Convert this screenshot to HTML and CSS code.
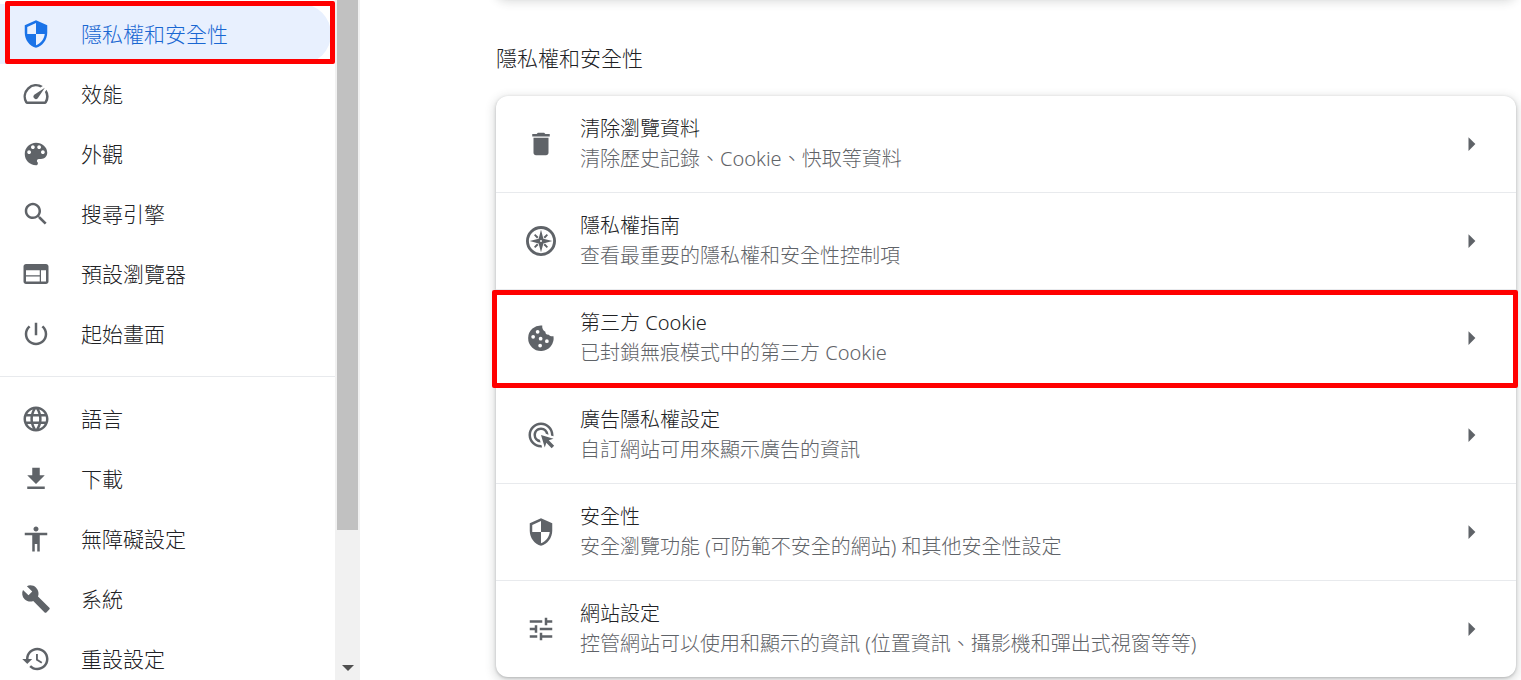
FILE: index.html
```html
<!DOCTYPE html>
<html lang="zh-Hant">
  <head>
    <meta charset="utf-8">
    <title>設定 - 隱私權和安全性</title>
    <link rel="stylesheet" href="styles.css">
  </head>
  <body>
    <div class="sidebar">
      <nav class="menu">
        <a class="item selected" href="#privacy">
          <svg class="icon" viewBox="0 0 24 24"><path fill-rule="evenodd" d="M12 1L3 5v6c0 5.55 3.84 10.74 9 12 5.16-1.26 9-6.45 9-12V5l-9-4zM12 3.2L5 6.3V12h7zM12 12h7c-.53 4.12-3.28 7.79-7 8.94z"/></svg>
          <span>隱私權和安全性</span>
        </a>
        <a class="item" href="#performance">
          <svg class="icon" viewBox="0 0 24 24"><path d="M20.38 8.57l-1.23 1.85a8 8 0 0 1-.22 7.58H5.07A8 8 0 0 1 15.58 6.85l1.85-1.23A10 10 0 0 0 3.35 19a2 2 0 0 0 1.72 1h13.85a2 2 0 0 0 1.74-1 10 10 0 0 0-.27-10.44zm-9.79 6.84a2 2 0 0 0 2.83 0l5.66-8.49-8.49 5.66a2 2 0 0 0 0 2.83z"/></svg>
          <span>效能</span>
        </a>
        <a class="item" href="#appearance">
          <svg class="icon" viewBox="0 0 24 24"><path d="M12 3c-4.97 0-9 4.03-9 9s4.03 9 9 9c.83 0 1.5-.67 1.5-1.5 0-.39-.15-.74-.39-1.01-.23-.26-.38-.61-.38-.99 0-.83.67-1.5 1.5-1.5H16c2.76 0 5-2.24 5-5 0-4.42-4.03-8-9-8zm-5.5 9c-.83 0-1.5-.67-1.5-1.5S5.67 9 6.5 9 8 9.67 8 10.5 7.33 12 6.5 12zm3-4C8.67 8 8 7.33 8 6.5S8.67 5 9.5 5s1.5.67 1.5 1.5S10.33 8 9.5 8zm5 0c-.83 0-1.5-.67-1.5-1.5S13.67 5 14.5 5s1.5.67 1.5 1.5S15.33 8 14.5 8zm3 4c-.83 0-1.5-.67-1.5-1.5S16.67 9 17.5 9s1.5.67 1.5 1.5-.67 1.5-1.5 1.5z"/></svg>
          <span>外觀</span>
        </a>
        <a class="item" href="#search">
          <svg class="icon" viewBox="0 0 24 24"><path d="M15.5 14h-.79l-.28-.27C15.41 12.59 16 11.11 16 9.5 16 5.91 13.09 3 9.5 3S3 5.91 3 9.5 5.91 16 9.5 16c1.61 0 3.09-.59 4.23-1.57l.27.28v.79l5 4.99L20.49 19l-4.99-5zm-6 0C7.01 14 5 11.99 5 9.5S7.01 5 9.5 5 14 7.01 14 9.5 11.99 14 9.5 14z"/></svg>
          <span>搜尋引擎</span>
        </a>
        <a class="item" href="#defaultBrowser">
          <svg class="icon" viewBox="0 0 24 24"><path d="M20 4H4c-1.1 0-1.99.9-1.99 2L2 18c0 1.1.9 2 2 2h16c1.1 0 2-.9 2-2V6c0-1.1-.9-2-2-2zm-5 14H4v-4h11v4zm0-5H4V9h11v4zm5 5h-4V9h4v9z"/></svg>
          <span>預設瀏覽器</span>
        </a>
        <a class="item" href="#onStartup">
          <svg class="icon" viewBox="0 0 24 24"><path d="M13 3h-2v10h2V3zm4.83 2.17l-1.42 1.42C17.99 7.86 19 9.81 19 12c0 3.87-3.13 7-7 7s-7-3.13-7-7c0-2.19 1.01-4.14 2.58-5.42L6.17 5.17C4.23 6.82 3 9.26 3 12c0 4.97 4.03 9 9 9s9-4.03 9-9c0-2.74-1.23-5.18-3.17-6.83z"/></svg>
          <span>起始畫面</span>
        </a>
        <hr class="separator">
        <a class="item" href="#languages">
          <svg class="icon" viewBox="0 0 24 24"><path d="M11.99 2C6.47 2 2 6.48 2 12s4.47 10 9.99 10C17.52 22 22 17.52 22 12S17.52 2 11.99 2zm6.93 6h-2.95c-.32-1.25-.78-2.45-1.38-3.56 1.84.63 3.37 1.91 4.33 3.56zM12 4.04c.83 1.2 1.48 2.53 1.91 3.96h-3.82c.43-1.43 1.08-2.76 1.91-3.96zM4.26 14C4.1 13.36 4 12.69 4 12s.1-1.36.26-2h3.38c-.08.66-.14 1.32-.14 2s.06 1.34.14 2H4.26zm.82 2h2.95c.32 1.25.78 2.45 1.38 3.56-1.84-.63-3.37-1.9-4.33-3.56zm2.95-8H5.08c.96-1.66 2.49-2.93 4.33-3.56C8.81 5.55 8.35 6.75 8.03 8zM12 19.96c-.83-1.2-1.48-2.53-1.91-3.96h3.82c-.43 1.43-1.08 2.76-1.91 3.96zM14.34 14H9.66c-.09-.66-.16-1.32-.16-2s.07-1.35.16-2h4.68c.09.65.16 1.32.16 2s-.07 1.34-.16 2zm.25 5.56c.6-1.11 1.06-2.31 1.38-3.56h2.95c-.96 1.65-2.49 2.93-4.33 3.56zM16.36 14c.08-.66.14-1.32.14-2s-.06-1.34-.14-2h3.38c.16.64.26 1.31.26 2s-.1 1.36-.26 2h-3.38z"/></svg>
          <span>語言</span>
        </a>
        <a class="item" href="#downloads">
          <svg class="icon" viewBox="0 0 24 24"><path d="M19 9h-4V3H9v6H5l7 7 7-7zM5 18v2h14v-2H5z"/></svg>
          <span>下載</span>
        </a>
        <a class="item" href="#accessibility">
          <svg class="icon" viewBox="0 0 24 24"><path d="M12 2c1.1 0 2 .9 2 2s-.9 2-2 2-2-.9-2-2 .9-2 2-2zm9 7h-6v13h-2v-6h-2v6H9V9H3V7h18v2z"/></svg>
          <span>無障礙設定</span>
        </a>
        <a class="item" href="#system">
          <svg class="icon" viewBox="0 0 24 24"><path d="M22.7 19l-9.1-9.1c.9-2.3.4-5-1.5-6.9-2-2-5-2.4-7.4-1.3L9 6 6 9 1.6 4.7C.4 7.1.9 10.1 2.9 12.1c1.9 1.9 4.6 2.4 6.9 1.5l9.1 9.1c.4.4 1 .4 1.4 0l2.3-2.3c.5-.4.5-1.1.1-1.4z"/></svg>
          <span>系統</span>
        </a>
        <a class="item" href="#reset">
          <svg class="icon" viewBox="0 0 24 24"><path d="M13 3c-4.97 0-9 4.03-9 9H1l3.89 3.89.07.14L9 12H6c0-3.87 3.13-7 7-7s7 3.13 7 7-3.13 7-7 7c-1.93 0-3.68-.79-4.94-2.06l-1.42 1.42C8.27 19.99 10.51 21 13 21c4.97 0 9-4.03 9-9s-4.03-9-9-9zm-1 5v5l4.28 2.54.72-1.21-3.5-2.08V8H12z"/></svg>
          <span>重設設定</span>
        </a>
      </nav>
      <div class="scrollbar">
        <div class="thumb"></div>
        <svg class="scroll-down" viewBox="0 0 12 6"><path d="M0 0h12L6 6z"/></svg>
      </div>
    </div>

    <main class="content">
      <div class="card previous"></div>
      <h2 class="heading">隱私權和安全性</h2>
      <div class="card">
        <button class="row">
          <svg class="icon" viewBox="0 0 24 24"><path d="M6 19c0 1.1.9 2 2 2h8c1.1 0 2-.9 2-2V7H6v12zM19 4h-3.5l-1-1h-5l-1 1H5v2h14V4z"/></svg>
          <span class="text">
            <span class="title">清除瀏覽資料</span>
            <span class="sub">清除歷史記錄、Cookie、快取等資料</span>
          </span>
          <svg class="icon" viewBox="0 0 24 24"><path d="M10 6.5l5.5 5.5-5.5 5.5z"/></svg>
        </button>
        <button class="row">
          <svg class="icon" viewBox="0 0 24 24"><path fill-rule="evenodd" d="M12 0a12 12 0 1 0 0 24 12 12 0 0 0 0-24zM12 2.3a9.7 9.7 0 1 1 0 19.4 9.7 9.7 0 0 1 0-19.4z"/><path fill-rule="evenodd" d="M12 3l1.900 7.100L21 12l-7.100 1.900L12 21l-1.900-7.100L3 12l7.100-1.900zM12 11.200a.8.8 0 1 0 0 1.600.8.8 0 0 0 0-1.600z"/><path d="M6.400 7.400l1-1 2.600 2.400-1.200 1.200zM17.600 7.400l-1-1L14 8.800l1.200 1.200zM6.400 16.600l1 1 2.600-2.400L8.800 14zM17.600 16.600l-1 1-2.600-2.400 1.200-1.200z"/></svg>
          <span class="text">
            <span class="title">隱私權指南</span>
            <span class="sub">查看最重要的隱私權和安全性控制項</span>
          </span>
          <svg class="icon" viewBox="0 0 24 24"><path d="M10 6.5l5.5 5.5-5.5 5.5z"/></svg>
        </button>
        <button class="row marked">
          <svg class="icon" viewBox="0 0 24 24"><path fill-rule="evenodd" d="M13 2A10.2 10.2 0 1 0 22 10.600C20.500 10.900 19 10.500 18.300 9.300 16.700 9.600 15.400 8.500 15.500 6.900 13.700 6.300 12.700 4.300 13 2zM9.300 5.500a1.500 1.500 0 1 0 0 3 1.500 1.500 0 0 0 0-3zM5.700 9.500a1.500 1.500 0 1 0 0 3 1.500 1.500 0 0 0 0-3zM11.700 11a1.500 1.500 0 1 0 0 3 1.500 1.500 0 0 0 0-3zM16.700 13a1.500 1.500 0 1 0 0 3 1.500 1.500 0 0 0 0-3zM11.300 16.500a1.500 1.500 0 1 0 0 3 1.500 1.500 0 0 0 0-3z"/></svg>
          <span class="text">
            <span class="title">第三方 Cookie</span>
            <span class="sub">已封鎖無痕模式中的第三方 Cookie</span>
          </span>
          <svg class="icon" viewBox="0 0 24 24"><path d="M10 6.5l5.5 5.5-5.5 5.5z"/></svg>
        </button>
        <button class="row">
          <svg class="icon" viewBox="0 0 24 24"><path d="M11.710 17.990A5.993 5.993 0 0 1 6 12c0-3.310 2.690-6 6-6 3.220 0 5.840 2.530 5.990 5.710l-2.100-.63a3.999 3.999 0 1 0-4.810 4.810l.63 2.100zM22 12c0 .3-.01.6-.04.9l-1.970-.59c.01-.1.010-.210.010-.310 0-4.420-3.580-8-8-8s-8 3.580-8 8 3.580 8 8 8c.1 0 .210 0 .310-.01l.59 1.970c-.3.030-.6.040-.9.040-5.520 0-10-4.480-10-10S6.480 2 12 2s10 4.480 10 10zm-3.770 4.260L22 15l-10-3 3 10 1.260-3.770 4.270 4.270 1.980-1.980-4.280-4.260z"/></svg>
          <span class="text">
            <span class="title">廣告隱私權設定</span>
            <span class="sub">自訂網站可用來顯示廣告的資訊</span>
          </span>
          <svg class="icon" viewBox="0 0 24 24"><path d="M10 6.5l5.5 5.5-5.5 5.5z"/></svg>
        </button>
        <button class="row">
          <svg class="icon" viewBox="0 0 24 24"><path fill-rule="evenodd" d="M12 1L3 5v6c0 5.55 3.84 10.74 9 12 5.16-1.26 9-6.45 9-12V5l-9-4zM12 3.2L5 6.3V12h7zM12 12h7c-.53 4.12-3.28 7.79-7 8.94z"/></svg>
          <span class="text">
            <span class="title">安全性</span>
            <span class="sub">安全瀏覽功能 (可防範不安全的網站) 和其他安全性設定</span>
          </span>
          <svg class="icon" viewBox="0 0 24 24"><path d="M10 6.5l5.5 5.5-5.5 5.5z"/></svg>
        </button>
        <button class="row">
          <svg class="icon" viewBox="0 0 24 24"><path d="M3 17v2h6v-2H3zM3 5v2h10V5H3zm10 16v-2h8v-2h-8v-2h-2v6h2zM7 9v2H3v2h4v2h2V9H7zm14 4v-2H11v2h10zm-6-4h2V7h4V5h-4V3h-2v6z"/></svg>
          <span class="text">
            <span class="title">網站設定</span>
            <span class="sub">控管網站可以使用和顯示的資訊 (位置資訊、攝影機和彈出式視窗等等)</span>
          </span>
          <svg class="icon" viewBox="0 0 24 24"><path d="M10 6.5l5.5 5.5-5.5 5.5z"/></svg>
        </button>
      </div>
    </main>
  </body>
</html>
```
FILE: styles.css
```css
* {
  box-sizing: border-box;
}

body {
  margin: 0;
  height: 100vh;
  display: flex;
  overflow: hidden;
  background: #fff;
  color: #202124;
  font-family: "Noto Sans", "Noto Sans CJK TC", sans-serif;
  font-weight: 300;
}

.icon {
  width: 30px;
  height: 30px;
  flex: none;
  fill: #5f6368;
}

/* left menu */
.sidebar {
  display: flex;
  flex: none;
  width: 360px;
  overflow: hidden;
}

.menu {
  flex: 1;
  padding-top: 4px;
}

.item {
  position: relative;
  display: flex;
  align-items: center;
  gap: 30px;
  height: 60px;
  margin-right: 4px;
  padding-left: 21px;
  border-radius: 0 30px 30px 0;
  color: #202124;
  font-size: 21px;
  line-height: 30px;
  text-decoration: none;
}

.selected {
  background: #e8f0fe;
  color: #1967d2;
}

.selected .icon {
  fill: #1a73e8;
}

/* red frames */
.selected::after,
.marked::after {
  content: "";
  position: absolute;
  z-index: 1;
  border: 5px solid #f00;
  border-radius: 2px;
}

.selected::after {
  top: -3px;
  right: -4px;
  bottom: 0;
  left: 5px;
}

.marked::after {
  top: 0;
  right: -2px;
  bottom: -2px;
  left: -4px;
}

.separator {
  height: 1px;
  margin: 12px 0;
  border: 0;
  background: #e8eaed;
}

.scrollbar {
  display: flex;
  flex-direction: column;
  justify-content: space-between;
  align-items: center;
  width: 25px;
  height: 100vh;
  padding-bottom: 9px;
  background: #f1f1f1;
}

.thumb {
  width: 21px;
  height: 79%;
  background: #c1c1c1;
}

.scroll-down {
  width: 12px;
  height: 6px;
  fill: #505050;
}

/* settings */
.content {
  flex: 1;
  overflow: hidden;
  padding: 0 5px 0 136px;
}

.card {
  border-radius: 12px;
  background: #fff;
  box-shadow: 0 1px 3px rgba(60, 64, 67, .3), 0 3px 9px 3px rgba(60, 64, 67, .15);
}

.previous {
  height: 40px;
  margin-top: -43px;
}

.heading {
  margin: 46px 0 23px;
  font-size: 21px;
  font-weight: 300;
  line-height: 30px;
}

.row {
  position: relative;
  display: flex;
  align-items: center;
  width: 100%;
  padding: 18px 30px;
  border: 0;
  background: none;
  color: inherit;
  font: inherit;
  text-align: left;
  cursor: pointer;
}

.row + .row {
  border-top: 1px solid #e8eaed;
}

.text {
  flex: 1;
  padding-left: 24px;
  font-size: 20px;
  line-height: 30px;
}

.title,
.sub {
  display: block;
}

.sub {
  color: #5f6368;
}
```
